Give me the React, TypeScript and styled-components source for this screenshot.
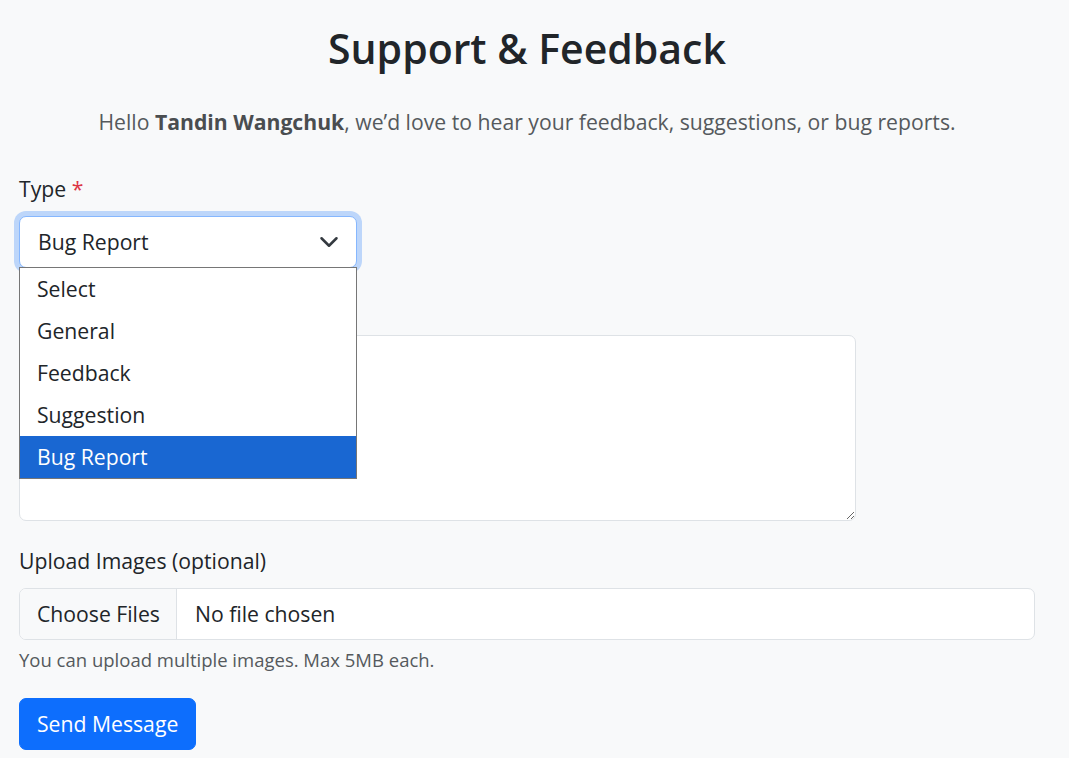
import styled, { createGlobalStyle } from 'styled-components';

const GlobalStyle = createGlobalStyle`
  html, body {
    margin: 0;
    padding: 0;
    background: #f8f9fa;
  }

  body {
    font-family: 'Open Sans', 'Noto Sans', sans-serif;
    font-size: 21.2px;
    line-height: 1.5;
    color: #212529;
  }

  * {
    box-sizing: border-box;
  }
`;

const typeOptions = ['Select', 'General', 'Feedback', 'Suggestion', 'Bug Report'];
const selectedType = 'Bug Report';

function App() {
  return (
    <>
      <GlobalStyle />
      <Page>
        <Title>Support &amp; Feedback</Title>
        <Lead>
          Hello <strong>Tandin Wangchuk</strong>, we’d love to hear your feedback, suggestions, or
          bug reports.
        </Lead>

        <Form onSubmit={(e) => e.preventDefault()}>
          <Field>
            <Label>
              Type <Required>*</Required>
            </Label>
            <SelectWrap>
              <SelectBox $focused>
                <span>{selectedType}</span>
                <Chevron viewBox="0 0 16 16" aria-hidden>
                  <path
                    d="m2 5 6 6 6-6"
                    fill="none"
                    stroke="#343a40"
                    strokeWidth="2"
                    strokeLinecap="round"
                    strokeLinejoin="round"
                  />
                </Chevron>
              </SelectBox>
              {/* open native list, drawn over the message field */}
              <OptionList>
                {typeOptions.map((option) => (
                  <Option key={option} $active={option === selectedType}>
                    {option}
                  </Option>
                ))}
              </OptionList>
            </SelectWrap>
          </Field>

          <Field>
            <Label>Message</Label>
            <MessageInput rows={5} />
          </Field>

          <Field>
            <Label>Upload Images (optional)</Label>
            <FileField>
              <FileButton>Choose Files</FileButton>
              <FileName>No file chosen</FileName>
            </FileField>
            <HelpText>You can upload multiple images. Max 5MB each.</HelpText>
          </Field>

          <SubmitButton type="submit">Send Message</SubmitButton>
        </Form>
      </Page>
    </>
  );
}

const Page = styled.main`
  width: 1016px;
  margin-left: 19px;
  padding-top: 22px;
`;

const Title = styled.h1`
  margin: 0 0 33px;
  text-align: center;
  font-size: 41px;
  font-weight: 600;
  line-height: 52px;
  color: #212529;
`;

const Lead = styled.p`
  margin: 0 0 37px;
  text-align: center;
  line-height: 30px;
  color: #55595d;

  strong {
    font-weight: 700;
    color: #4a4d50;
  }
`;

const Form = styled.form`
  display: flex;
  flex-direction: column;
  align-items: flex-start;
  gap: 25px;
`;

const Field = styled.div`
  display: flex;
  flex-direction: column;
  width: 100%;
`;

const Label = styled.label`
  margin-bottom: 12px;
  line-height: 30px;
`;

const Required = styled.span`
  color: #dc3545;
`;

const SelectWrap = styled.div`
  position: relative;
  width: 338px;
`;

const SelectBox = styled.div<{ $focused?: boolean }>`
  display: flex;
  align-items: center;
  justify-content: space-between;
  height: 52px;
  padding: 0 17px 0 18px;
  background: #fff;
  border: 1px solid ${(p) => (p.$focused ? '#86b7fe' : '#dee2e6')};
  border-radius: 7px;
  box-shadow: ${(p) => (p.$focused ? '0 0 0 5px rgba(13, 110, 253, 0.25)' : 'none')};
`;

const Chevron = styled.svg`
  width: 20px;
  height: 20px;
`;

const OptionList = styled.ul`
  position: absolute;
  top: 51px;
  left: 0;
  width: 338px;
  margin: 0;
  padding: 0;
  list-style: none;
  background: #fff;
  border: 1px solid #767676;
  z-index: 10;
`;

const Option = styled.li<{ $active?: boolean }>`
  height: 42px;
  padding-left: 17px;
  line-height: 42px;
  background: ${(p) => (p.$active ? '#1967d2' : 'transparent')};
  color: ${(p) => (p.$active ? '#fff' : '#212529')};
`;

const MessageInput = styled.textarea`
  width: 837px;
  height: 186px;
  padding: 8px 18px;
  font: inherit;
  background: #fff;
  border: 1px solid #dee2e6;
  border-radius: 7px;
  outline: none;
`;

const FileField = styled.div`
  display: flex;
  align-items: stretch;
  height: 52px;
  background: #fff;
  border: 1px solid #dee2e6;
  border-radius: 7px;
  overflow: hidden;
`;

const FileButton = styled.div`
  display: flex;
  align-items: center;
  padding: 0 16px 0 17px;
  background: #f8f9fa;
  border-right: 1px solid #dee2e6;
`;

const FileName = styled.div`
  display: flex;
  align-items: center;
  padding: 0 18px;
`;

const HelpText = styled.div`
  margin-top: 7px;
  font-size: 18.5px;
  line-height: 26px;
  color: #55595d;
`;

const SubmitButton = styled.button`
  height: 52px;
  padding: 0 17px;
  font: inherit;
  color: #fff;
  background: #0d6efd;
  border: 1px solid #0d6efd;
  border-radius: 7px;
  cursor: pointer;
`;

export default App;
